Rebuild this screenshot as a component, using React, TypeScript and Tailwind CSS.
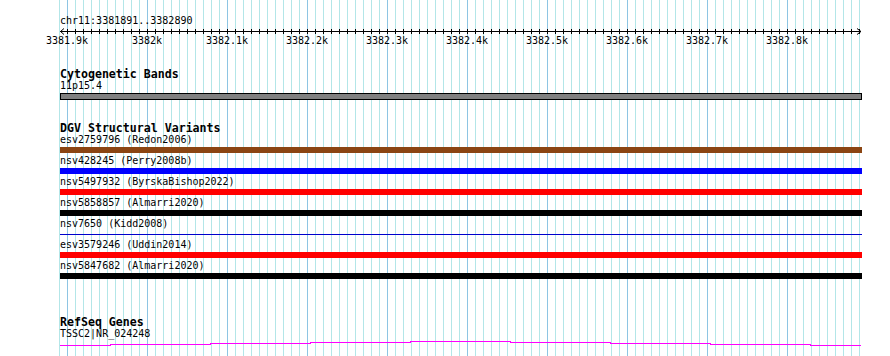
import React from "react";

const gridXs = Array.from({ length: 101 }, (_, k) => 59 + k * 8);
const majorTicks = [
  "3381.9k",
  "3382k",
  "3382.1k",
  "3382.2k",
  "3382.3k",
  "3382.4k",
  "3382.5k",
  "3382.6k",
  "3382.7k",
  "3382.8k",
];

type Variant = { label: string; color: string; thin?: boolean };

const variants: Variant[] = [
  { label: "esv2759796 (Redon2006)", color: "bg-[#8b4513]" },
  { label: "nsv428245 (Perry2008b)", color: "bg-[#0000ff]" },
  { label: "nsv5497932 (ByrskaBishop2022)", color: "bg-[#ff0000]" },
  { label: "nsv5858857 (Almarri2020)", color: "bg-black" },
  { label: "nsv7650 (Kidd2008)", color: "bg-[#0000cc]", thin: true },
  { label: "esv3579246 (Uddin2014)", color: "bg-[#ff0000]" },
  { label: "nsv5847682 (Almarri2020)", color: "bg-black" },
];

// gene line, stepped in 100px pieces (x relative to track start at 60)
const genePath =
  "M0,5.5 H50 V4.5 H150 V3.5 H250 V2.5 H350 V1.5 H450 V2.5 H550 V3.5 H650 V4.5 H750 V5.5 H801";

function Grid() {
  return (
    <svg className="absolute inset-0" width={890} height={356} shapeRendering="crispEdges">
      {gridXs.map((x, k) => (
        <line
          key={x}
          x1={x + 0.5}
          x2={x + 0.5}
          y1={0}
          y2={356}
          stroke={k % 10 === 1 ? "#8ec5e3" : "#b3e6e8"}
          strokeWidth={1}
        />
      ))}
    </svg>
  );
}

function Ruler() {
  return (
    <div>
      <div className="mt-[15px] leading-[12px] text-[10px]">chr11:3381891..3382890</div>
      <svg width={803} height={8} className="block" shapeRendering="crispEdges">
        <line x1={0} x2={801} y1={4.5} y2={4.5} stroke="black" />
        {gridXs.slice(1).map((x) => (
          <line key={x} x1={x - 60 + 0.5} x2={x - 60 + 0.5} y1={2} y2={7} stroke="black" />
        ))}
        <path d="M4,1.5 L0.5,4.5 L4,7.5" fill="none" stroke="black" shapeRendering="auto" />
        <path d="M797,1.5 L801,4.5 L797,7.5" fill="none" stroke="black" shapeRendering="auto" />
      </svg>
      <div className="relative h-[12px] w-[802px] text-[10px] leading-[12px]">
        {majorTicks.map((t, i) => (
          <span key={t} className="absolute top-0 -translate-x-1/2 whitespace-nowrap" style={{ left: 7 + i * 80 }}>
            {t}
          </span>
        ))}
      </div>
    </div>
  );
}

function TrackTitle({ children, className = "" }: { children: React.ReactNode; className?: string }) {
  return <div className={`text-[11.6px] font-bold leading-[12px] ${className}`}>{children}</div>;
}

export default function App() {
  return (
    <div
      className="relative w-[890px] h-[356px] overflow-hidden bg-white text-black"
      style={{ fontFamily: '"DejaVu Sans Mono", "Liberation Mono", monospace' }}
    >
      <Grid />
      <div className="relative pl-[60px] flex flex-col">
        <Ruler />

        {/* Cytogenetic bands */}
        <TrackTitle className="mt-[21px]">Cytogenetic Bands</TrackTitle>
        <div className="text-[10px] leading-[12px]">11p15.4</div>
        <div className="mt-px h-[7px] w-[802px] border border-black bg-[#808080]" />

        {/* DGV */}
        <TrackTitle className="mt-[22px]">DGV Structural Variants</TrackTitle>
        <div className="flex flex-col">
          {variants.map((v) => (
            <div key={v.label} className="h-[21px] flex flex-col">
              <div className="text-[10px] leading-[12px] whitespace-nowrap">{v.label}</div>
              <div className="mt-px h-[6px] flex items-center">
                {v.thin ? (
                  <div className={`h-px w-[802px] ${v.color}`} />
                ) : (
                  <div className={`h-[6px] w-[802px] ${v.color}`} />
                )}
              </div>
            </div>
          ))}
        </div>

        {/* RefSeq */}
        <TrackTitle className="mt-[35px]">RefSeq Genes</TrackTitle>
        <div className="text-[10px] leading-[12px]">TSSC2|NR_024248</div>
        <svg width={802} height={8} className="block" shapeRendering="crispEdges">
          <path d={genePath} fill="none" stroke="#ff00ff" strokeWidth={1} />
        </svg>
      </div>
    </div>
  );
}
